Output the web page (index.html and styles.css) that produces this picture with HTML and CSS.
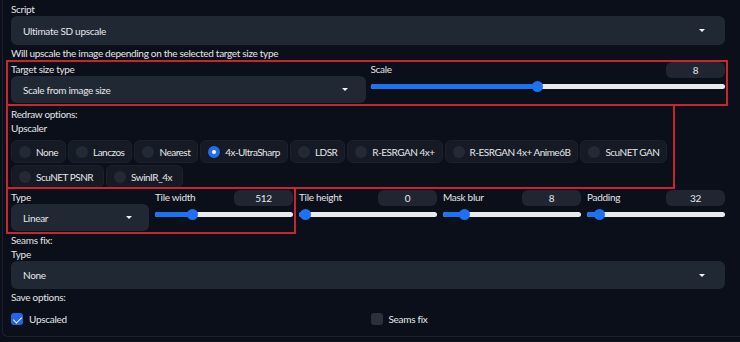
FILE: index.html
```html
<!DOCTYPE html>
<html>
<head>
	<title>Ultimate SD upscale</title>
	<link rel="stylesheet" href="styles.css">
</head>
<body>
	<div class="panel">
		<div class="label">Script</div>
		<div class="dropdown tall">
			<span>Ultimate SD upscale</span>
			<span class="caret"></span>
		</div>
		<div class="info">Will upscale the image depending on the selected target size type</div>

		<div class="row mark mark-target">
			<div class="col">
				<div class="label">Target size type</div>
				<div class="dropdown">
					<span>Scale from image size</span>
					<span class="caret"></span>
				</div>
			</div>
			<div class="col">
				<div class="slider-head">
					<span class="label">Scale</span>
					<span class="number">8</span>
				</div>
				<div class="track"><div class="fill" style="width: 47%"></div><div class="thumb" style="left: 47%"></div></div>
			</div>
		</div>

		<div class="redraw mark mark-redraw">
			<div class="label">Redraw options:</div>
			<div class="label">Upscaler</div>
			<div class="radios first">
				<div class="radio"><span class="dot"></span>None</div>
				<div class="radio"><span class="dot"></span>Lanczos</div>
				<div class="radio"><span class="dot"></span>Nearest</div>
				<div class="radio"><span class="dot on"></span>4x-UltraSharp</div>
				<div class="radio"><span class="dot"></span>LDSR</div>
				<div class="radio"><span class="dot"></span>R-ESRGAN 4x+</div>
				<div class="radio"><span class="dot"></span>R-ESRGAN 4x+ Anime6B</div>
				<div class="radio"><span class="dot"></span>ScuNET GAN</div>
			</div>
			<div class="radios second">
				<div class="radio"><span class="dot"></span>ScuNET PSNR</div>
				<div class="radio"><span class="dot"></span>SwinIR_4x</div>
			</div>
		</div>

		<div class="tiles">
			<div class="pair mark mark-tile">
				<div class="cell">
					<div class="label">Type</div>
					<div class="dropdown small">
						<span>Linear</span>
						<span class="caret"></span>
					</div>
				</div>
				<div class="cell">
					<div class="slider-head">
						<span class="label">Tile width</span>
						<span class="number">512</span>
					</div>
					<div class="track"><div class="fill" style="width: 27%"></div><div class="thumb" style="left: 27%"></div></div>
				</div>
			</div>
			<div class="cell">
				<div class="slider-head">
					<span class="label">Tile height</span>
					<span class="number">0</span>
				</div>
				<div class="track"><div class="fill" style="width: 4%"></div><div class="thumb" style="left: 4%"></div></div>
			</div>
			<div class="cell">
				<div class="slider-head">
					<span class="label">Mask blur</span>
					<span class="number">8</span>
				</div>
				<div class="track"><div class="fill" style="width: 15%"></div><div class="thumb" style="left: 15%"></div></div>
			</div>
			<div class="cell">
				<div class="slider-head">
					<span class="label">Padding</span>
					<span class="number">32</span>
				</div>
				<div class="track"><div class="fill" style="width: 9%"></div><div class="thumb" style="left: 9%"></div></div>
			</div>
		</div>

		<div class="label seams">Seams fix:</div>
		<div class="label">Type</div>
		<div class="dropdown">
			<span>None</span>
			<span class="caret"></span>
		</div>
		<div class="label save">Save options:</div>
		<div class="row checks">
			<div class="col check"><span class="box on"></span>Upscaled</div>
			<div class="col check"><span class="box"></span>Seams fix</div>
		</div>
	</div>
</body>
</html>
```

FILE: styles.css
```css
* {
	box-sizing: border-box;
}

body {
	margin: 0;
	background-color: #0b0f19;
	font-family: Lato, "Noto Sans", sans-serif;
	font-size: 10px;
	letter-spacing: -0.3px;
	color: #e5e7eb;
	overflow: hidden;
}

.panel {
	margin-left: 2px;
	height: 337px;
	padding: 2px 0 0 8px;
	border-left: 1px solid #1c222d;
	border-bottom: 1px solid #1c222d;
	border-bottom-left-radius: 6px;
}

.panel > * {
	width: 714px;
}

.label {
	line-height: 14px;
	color: #e2e5ea;
}

.info {
	margin-top: 1px;
	line-height: 14px;
}

.dropdown {
	display: flex;
	align-items: center;
	justify-content: space-between;
	height: 28px;
	padding: 0 20px 0 12px;
	background-color: #202834;
	border-radius: 6px;
}

.dropdown.tall {
	height: 29px;
}

.dropdown.small {
	height: 27px;
	padding-right: 17px;
}

.caret {
	width: 0;
	height: 0;
	border-left: 3px solid transparent;
	border-right: 3px solid transparent;
	border-top: 3px solid #f3f4f6;
}

.row {
	display: flex;
	gap: 5px;
}

.col {
	flex: 1;
	min-width: 0;
}

/* red annotation frames */
.mark {
	position: relative;
}

.mark::after {
	content: "";
	position: absolute;
	border: 2px solid #c8252c;
	pointer-events: none;
}

.mark-target {
	margin-top: 2px;
}

.mark-target .dropdown {
	height: 27px;
	padding-right: 18px;
}

.mark-target::after {
	top: -2px;
	right: -3px;
	bottom: -3px;
	left: -5px;
}

.mark-redraw {
	width: 660px;
	margin-top: 4px;
}

.mark-redraw::after {
	top: -3px;
	right: -4px;
	bottom: -1px;
	left: -5px;
}

.mark-tile::after {
	top: -3px;
	right: -3px;
	bottom: -3px;
	left: -5px;
}

.slider-head {
	display: flex;
	justify-content: space-between;
	align-items: flex-start;
	height: 17px;
}

.number {
	width: 59px;
	height: 16px;
	line-height: 16px;
	text-align: center;
	background-color: #1f2632;
	border-radius: 6px;
}

.track {
	position: relative;
	height: 5px;
	margin-top: 5px;
	background-color: #e8eaed;
	border-radius: 3px;
}

.fill {
	height: 100%;
	background-color: #1d72f2;
	border-radius: 3px;
}

.thumb {
	position: absolute;
	top: -3px;
	width: 11px;
	height: 11px;
	margin-left: -5px;
	background-color: #1d72f2;
	border-radius: 50%;
}

.radios {
	display: flex;
	gap: 2px;
	margin-top: 2px;
	white-space: nowrap;
}

.radios.first {
	width: 656px;
	margin-top: 5px;
}

.radios.first .radio {
	flex-grow: 1;
}

.radios.second .radio {
	padding-right: 10px;
}

.radio {
	display: flex;
	align-items: center;
	gap: 5px;
	height: 23px;
	padding: 0 7px 0 7px;
	background-color: #151a24;
	border: 1px solid #1b212c;
	border-radius: 6px;
	letter-spacing: -0.5px;
}

.dot {
	width: 12px;
	height: 12px;
	border-radius: 50%;
	background-color: #232a36;
	flex-shrink: 0;
}

.dot.on {
	border: 4px solid #1f6ff0;
	background-color: #fff;
}

.tiles {
	display: flex;
	gap: 6px;
	margin-top: 2px;
}

.pair {
	display: flex;
	gap: 6px;
}

.cell {
	width: 138px;
}

.seams {
	margin-top: 2px;
}

.save {
	margin-top: 1px;
}

.checks {
	margin-top: 8px;
	align-items: center;
}

.check {
	display: flex;
	align-items: center;
	gap: 6px;
	line-height: 14px;
}

.box {
	width: 12px;
	height: 12px;
	border-radius: 3px;
	background-color: #2a313d;
	position: relative;
}

.box.on {
	background-color: #2563eb;
}

.box.on::after {
	content: "";
	position: absolute;
	left: 4px;
	top: 2px;
	width: 4px;
	height: 7px;
	border-right: 1.5px solid #fff;
	border-bottom: 1.5px solid #fff;
	transform: rotate(45deg);
}
```
